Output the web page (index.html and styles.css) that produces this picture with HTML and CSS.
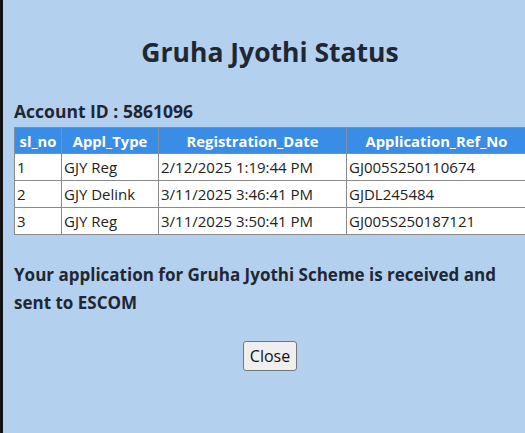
FILE: index.html
```html
<!DOCTYPE html>
<html>
<head>
<meta charset="utf-8">
<link rel="stylesheet" href="styles.css">
</head>
<body>
<div class="page">
  <h1 class="title">Gruha Jyothi Status</h1>
  <div class="account">Account ID : 5861096</div>
  <table class="grid">
    <colgroup>
      <col class="c1"><col class="c2"><col class="c3"><col class="c4">
    </colgroup>
    <thead>
      <tr><th>sl_no</th><th>Appl_Type</th><th>Registration_Date</th><th>Application_Ref_No</th></tr>
    </thead>
    <tbody>
      <tr><td>1</td><td>GJY Reg</td><td>2/12/2025 1:19:44 PM</td><td>GJ005S250110674</td></tr>
      <tr><td>2</td><td>GJY Delink</td><td>3/11/2025 3:46:41 PM</td><td>GJDL245484</td></tr>
      <tr><td>3</td><td>GJY Reg</td><td>3/11/2025 3:50:41 PM</td><td>GJ005S250187121</td></tr>
    </tbody>
  </table>
  <p class="message">Your application for Gruha Jyothi Scheme is received and sent to ESCOM</p>
  <div class="actions"><button class="btn" type="button">Close</button></div>
</div>
</body>
</html>
```
FILE: styles.css
```css
html, body {
  margin: 0;
  padding: 0;
}
body {
  background: #b3d0ee;
  border-left: 3px solid #141414;
  min-height: 433px;
  box-sizing: border-box;
  font-family: "Open Sans", "Noto Sans", sans-serif;
  color: #1f2733;
  overflow: hidden;
}
.page {
  width: 512px;
  padding-left: 11px;
}
.title {
  margin: 35px 0 0;
  font-size: 26.5px;
  font-weight: 700;
  text-align: center;
  line-height: 34px;
}
.account {
  margin-top: 30px;
  font-size: 17.5px;
  font-weight: 700;
  line-height: 24px;
}
.grid {
  width: 512px;
  margin-top: 4px;
  border-collapse: collapse;
  table-layout: fixed;
  font-size: 15px;
  background: #fff;
}
.c1 { width: 47px; }
.c2 { width: 97px; }
.c3 { width: 188px; }
.c4 { width: 180px; }
.grid th {
  background: #3a8de6;
  color: #fff;
  font-weight: 700;
  height: 25px;
  padding: 0 2px;
  border: 1px solid #7f8ea0;
  text-align: center;
  font-size: 14.8px;
}
.grid td {
  height: 26px;
  padding: 0 2px;
  border: 1px solid #8a8a8a;
  color: #222;
  white-space: nowrap;
}
.message {
  margin: 26px 0 0;
  font-size: 17px;
  font-weight: 700;
  line-height: 28px;
  width: 505px;
}
.actions {
  display: flex;
  justify-content: center;
  margin-top: 24px;
}
.btn {
  font-family: "Open Sans", sans-serif;
  font-size: 16px;
  line-height: 22px;
  padding: 3px 6px;
  background: #efefef;
  border: 1px solid #767676;
  border-radius: 3px;
  color: #111;
}
```
